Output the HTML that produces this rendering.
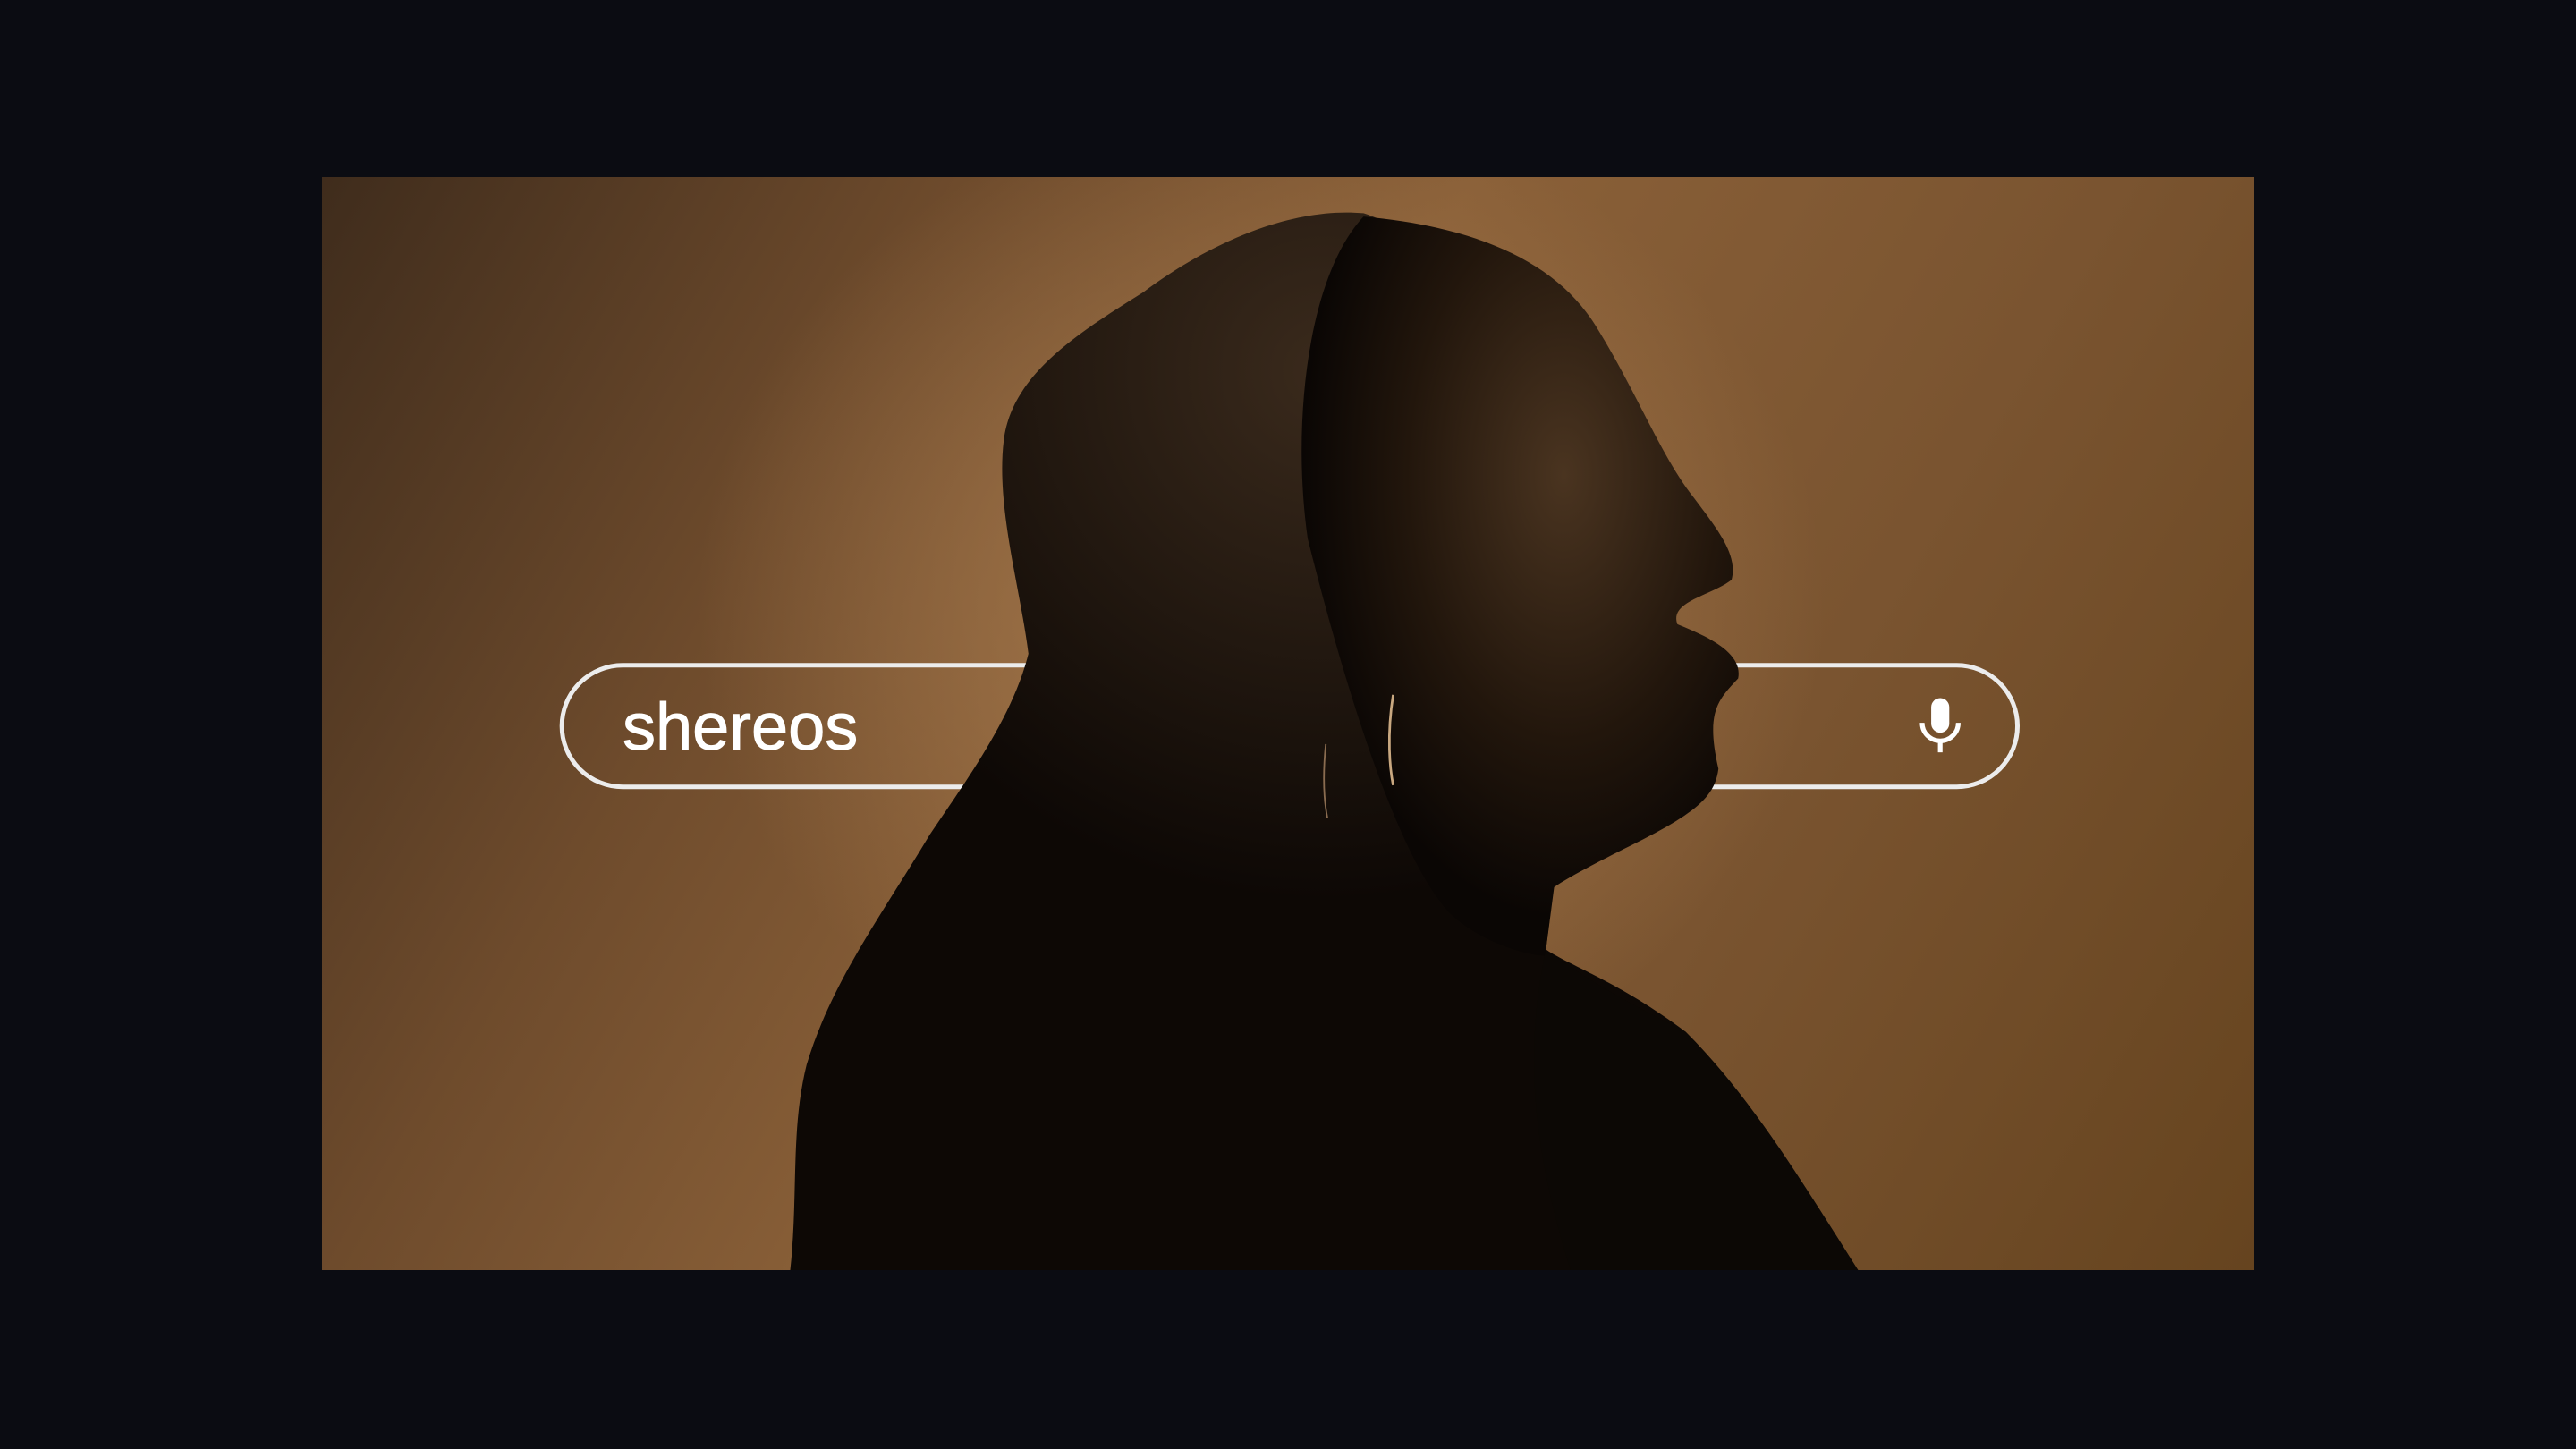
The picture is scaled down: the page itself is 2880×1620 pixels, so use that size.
<!DOCTYPE html>
<html><head><meta charset="utf-8"><style>
html,body{margin:0;padding:0;background:#0b0c12;width:2880px;height:1620px;overflow:hidden}
#img{position:absolute;left:360px;top:198px;width:2160px;height:1222px;overflow:hidden;
background:
radial-gradient(ellipse 900px 800px at 1050px 480px, rgba(170,125,80,0.9), rgba(150,105,60,0) 70%),
linear-gradient(120deg,#3f2c1c 0%,#6e4b2c 25%,#8a6038 45%,#7a5430 70%,#66441f 100%);}
svg{position:absolute;left:0;top:0}
.txt{position:absolute;left:336px;top:572px;font:74px "Liberation Sans",sans-serif;color:#fff;letter-spacing:0px;-webkit-text-stroke:1px #fff}
</style></head><body>
<div id="img">
<svg width="2160" height="1222" viewBox="0 0 1176 665" preserveAspectRatio="none">
<defs>
<radialGradient id="face" cx="0.6" cy="0.35" r="0.6">
<stop offset="0" stop-color="#4a3420"/><stop offset="0.6" stop-color="#22160c"/><stop offset="1" stop-color="#0a0604"/>
</radialGradient>
<radialGradient id="hair" cx="0.5" cy="0.15" r="0.5">
<stop offset="0" stop-color="#3a2a1c"/><stop offset="1" stop-color="#0d0805"/>
</radialGradient>
</defs>
<rect x="146" y="297" width="886" height="74" rx="37" ry="37" fill="none" stroke="#ececec" stroke-width="2.7"/>
<g transform="translate(985,333)" fill="#fff">
<rect x="-5.5" y="-16" width="11" height="21" rx="5.5"/>
<path d="M-11,-1 a11,11 0 0 0 22,0" fill="none" stroke="#fff" stroke-width="2.8"/>
<rect x="-1.4" y="9" width="2.8" height="8"/>
</g>
<path fill="url(#hair)" d="M634,22 C590,18 540,40 500,70 C460,95 420,120 415,160 C410,200 425,250 430,290 C420,330 390,370 370,400 C340,450 310,490 295,540 C285,580 290,620 285,665 L935,665 C900,610 870,560 830,520 C790,490 760,480 745,470 L750,430 C760,410 700,200 700,150 C700,100 690,40 634,22 Z"/>
<path fill="url(#face)" d="M634,24 C700,30 750,50 775,90 C800,130 815,170 835,195 C850,215 862,230 858,245 C845,255 820,258 825,272 C845,280 865,290 862,305 C850,318 842,325 850,360 C848,375 840,385 800,405 C780,415 760,425 750,432 L745,470 C760,480 700,470 680,440 C650,400 620,300 600,220 C590,150 600,60 634,24 Z"/>
<path d="M745,470 C765,485 790,500 830,520 C870,560 900,610 935,665 L760,665 C740,600 730,540 745,470 Z" fill="#0c0805"/>
<path d="M652,315 C648,340 650,360 652,370" stroke="#c9a880" stroke-width="1.5" fill="none"/>
<path d="M611,345 C609,365 610,380 612,390" stroke="#8a6c50" stroke-width="1" fill="none"/>
</svg>
<div class="txt">shereos</div>
</div>
</body></html>
